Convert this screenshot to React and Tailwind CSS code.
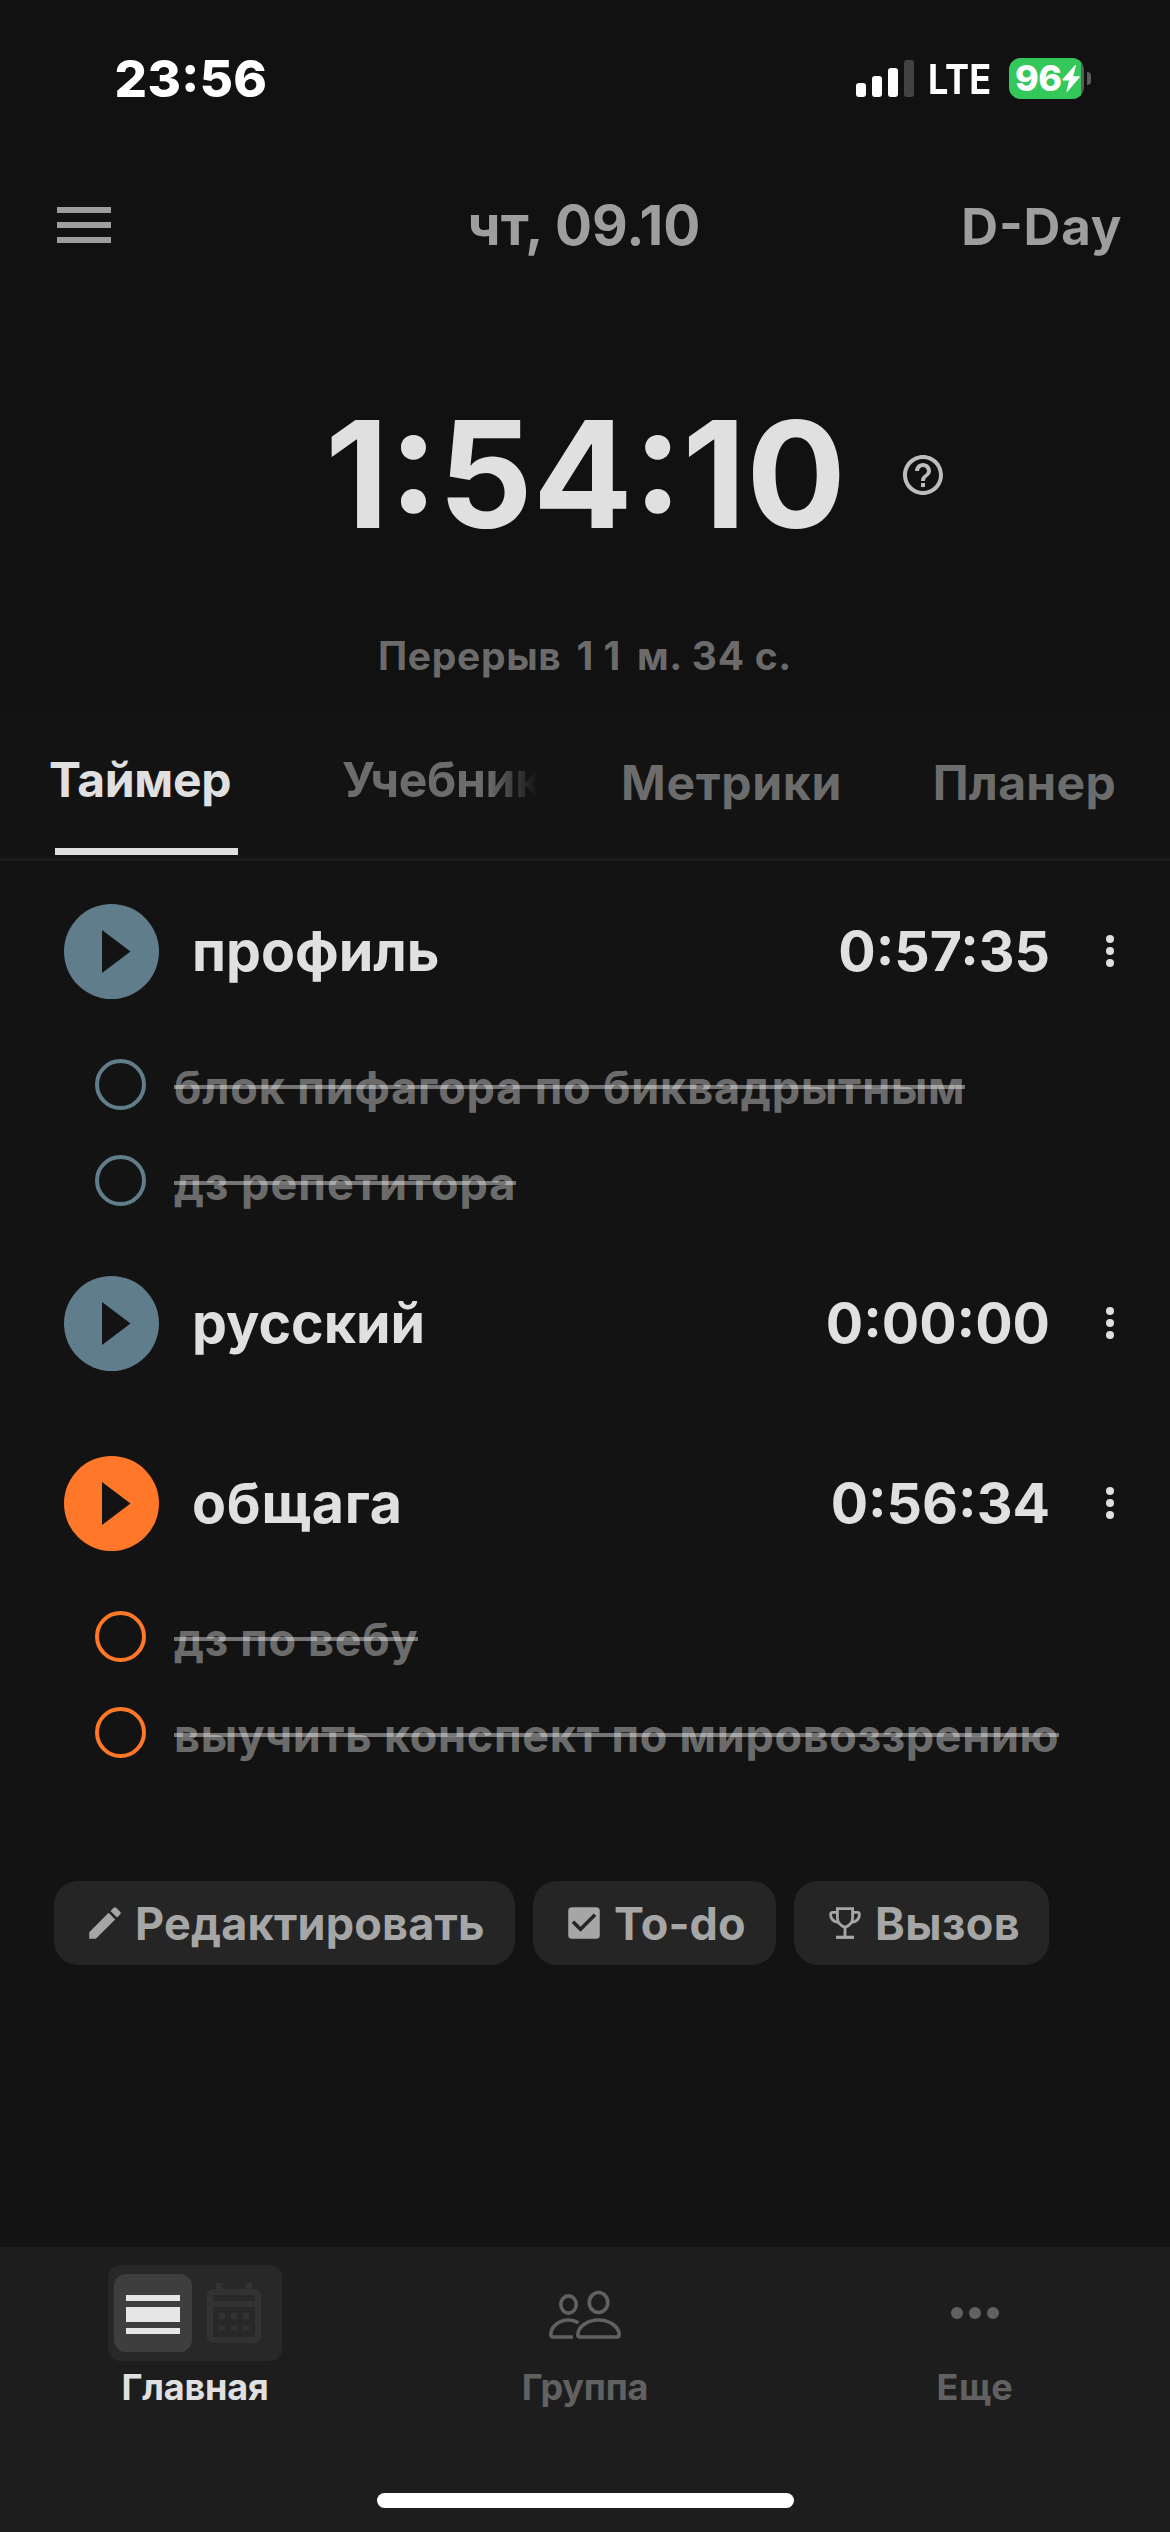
import React from "react";
import { MdHelpOutline, MdEdit, MdCheckBox } from "react-icons/md";

function StatusBar() {
  return (
    <div className="flex h-[156px] items-center">
      <span className="ml-[114.5px] w-[741.5px] text-[51px] leading-none font-extrabold tracking-[0.4px] text-white [font-feature-settings:'case']">23:56</span>
      <div className="flex h-[37px] items-end gap-[6px]">
        <i className="h-[14px] w-[10px] rounded-[3px] bg-white" />
        <i className="h-[21px] w-[10px] rounded-[3px] bg-white" />
        <i className="h-[29px] w-[10px] rounded-[3px] bg-white" />
        <i className="h-[37px] w-[10px] rounded-[3px] bg-[#424242]" />
      </div>
      <span className="ml-[14px] w-[81px] origin-left scale-x-[0.88] pt-[3px] text-[41px] leading-none font-bold text-white">LTE</span>
      <div className="flex h-[41px] w-[75px] overflow-hidden rounded-[12px] bg-[#5c5c5c]">
        <div className="flex h-[41px] w-[72px] items-center bg-[#34c759] pl-[6px]">
          <span className="w-[47px] text-[36px] leading-none font-extrabold tracking-[-0.5px] text-white">96</span>
          <svg className="h-[27px] w-[18px] shrink-0" viewBox="0 0 18 27" fill="#fff">
            <path d="M13.2 0 0.3 14.4Q0 15.4 1 15.6H7L4.4 26.4Q4.8 27.2 5.6 26.6L17.8 12.2Q18 11.4 17.2 11.2H11.2L14 .4Q13.8-.3 13.2 0Z" />
          </svg>
        </div>
      </div>
      <i className="ml-[3px] h-[13px] w-[4px] rounded-r-full bg-[#5c5c5c]" />
    </div>
  );
}

function Header() {
  return (
    <div className="flex h-[138px] items-center pr-[46.7px] pl-[57px] font-bold text-[#9e9e9e]">
      <div className="flex w-[410.6px] flex-col gap-[9px]">
        <i className="h-[6px] w-[54px] bg-[#9e9e9e]" />
        <i className="h-[6px] w-[54px] bg-[#9e9e9e]" />
        <i className="h-[6px] w-[54px] bg-[#9e9e9e]" />
      </div>
      <span className="text-[55px] leading-none">чт, 09.10</span>
      <span className="ml-auto w-[162px] pt-[2px] text-[51px] leading-none tracking-[0.79px] whitespace-nowrap [font-feature-settings:'case']">D-Day</span>
    </div>
  );
}

function Tab({ label, className, active }) {
  return (
    <div className={className}>
      <div className="h-[60px] text-[48px] leading-[60px] font-bold whitespace-nowrap">{label}</div>
      {active && <div className="mt-[37.5px] ml-[6px] h-[7.5px] w-[183px] bg-[#e0e0e0]" />}
    </div>
  );
}

function Dots() {
  return (
    <div className="flex w-[8px] flex-col gap-[4px]">
      <i className="size-[8px] rounded-full bg-[#e0e0e0]" />
      <i className="size-[8px] rounded-full bg-[#e0e0e0]" />
      <i className="size-[8px] rounded-full bg-[#e0e0e0]" />
    </div>
  );
}

function Subject({ name, time, color, className, nameClass = "" }) {
  return (
    <div className={"flex h-[95px] items-center pr-[56px] pl-[63.5px] text-[55.5px] leading-none font-bold text-[#e0e0e0] " + className}>
      <div className={"flex size-[95px] items-center rounded-full pl-[38px] " + color}>
        <svg className="h-[43px] w-[29px]" viewBox="0 0 29 43" fill="#131313"><path d="M0 0 28.5 21.5 0 43Z" /></svg>
      </div>
      <span className={"ml-[33.5px] grow " + nameClass}>{name}</span>
      <span className="mr-[56px]">{time}</span>
      <Dots />
    </div>
  );
}

function Task({ text, ring, className }) {
  return (
    <div className="flex h-[96px] items-center pl-[95px]">
      <div className={"size-[51px] rounded-full border-[4px] " + ring} />
      <div className={"relative ml-[28px] pt-[6px] text-[45px] leading-none font-bold whitespace-nowrap text-white/38 " + className}>
        {text}
        <i className="absolute top-[26px] left-0 h-[4px] w-full bg-white/41" />
      </div>
    </div>
  );
}

function Trophy() {
  return (
    <svg className="mx-[5px] size-[32px]" viewBox="0 0 32 32" fill="none" stroke="#a6a6a6" strokeWidth="2.8">
      <path d="M8.4 1.6h15.2v9.4c0 4-3.2 7.6-7.6 9.4-4.4-1.8-7.6-5.4-7.6-9.4Z" />
      <path d="M8.4 5.4H3.6c-1.4 0-2 .7-2 2 0 3.8 2.6 7 7.8 8M23.6 5.4h4.8c1.4 0 2 .7 2 2 0 3.8-2.6 7-7.8 8" />
      <path d="M16 20v10" />
      <path d="M7 30.3h18" strokeWidth="3.2" />
    </svg>
  );
}

function Chip({ icon, label, className }) {
  return (
    <div className={"flex h-[84px] items-center rounded-[24px] bg-[#252525] pl-[29.5px] text-[45px] leading-none font-bold text-[#a6a6a6] " + className}>
      {icon}
      <span className="ml-[9.5px] whitespace-nowrap">{label}</span>
    </div>
  );
}

function Calendar() {
  return (
    <svg className="ml-[15px] h-[60px] w-[54px]" viewBox="0 0 54 60" fill="#323232">
      <path fillRule="evenodd" d="M9 0h6v6h24V0h6v6h3a6 6 0 0 1 6 6v42a6 6 0 0 1-6 6H6a6 6 0 0 1-6-6V12a6 6 0 0 1 6-6h3ZM6 12v6h42v-6ZM6 24v30h42V24Z" />
      <path d="M12 30h6v6h-6zM24 30h6v6h-6zM36 30h6v6h-6zM12 42h6v6h-6zM24 42h6v6h-6zM36 42h6v6h-6z" />
    </svg>
  );
}

function People() {
  return (
    <svg className="mt-[3px] h-[50px] w-[72px]" viewBox="549 2290 72 50" fill="none" stroke="#616161" strokeWidth="3.6">
      <ellipse cx="568.5" cy="2304.5" rx="7.7" ry="8.6" />
      <ellipse cx="598.5" cy="2302.5" rx="9.3" ry="10" />
      <path d="M580.5 2337H616.5C618.3 2337 619.2 2336 619.2 2334.5C619 2327 610 2320 598.5 2320C587 2320 578 2327 577.8 2334.5C577.8 2336 578.7 2337 580.5 2337Z" />
      <path d="M573 2337H553.5C551.7 2337 550.8 2336 550.8 2334.5C551 2327 558.5 2320 568.5 2320C572.5 2320 575.5 2321 578.5 2322.8" />
    </svg>
  );
}

function NavItem({ label, className, children }) {
  return (
    <div className="flex w-[390px] flex-col items-center">
      <div className="flex h-[96px] items-center">{children}</div>
      <span className={"mt-[8px] text-[36px] leading-none font-bold " + className}>{label}</span>
    </div>
  );
}

export default function App() {
  return (
    <div className="flex h-[2532px] w-[1170px] flex-col overflow-hidden bg-[#131313] font-['Inter',sans-serif]">
      <div className="h-[711px] bg-[#111111]">
        <StatusBar />
        <Header />
        <div className="mt-[56px] flex h-[249px] items-center">
          <span className="ml-[325px] w-[573.5px] text-[148px] leading-none font-bold whitespace-nowrap text-[#e0e0e0]">1:54:10</span>
          <MdHelpOutline className="size-[48px] text-[#bdbdbd]" />
        </div>
        <div className="flex h-[112px] items-center justify-center text-[39px] leading-none font-bold tracking-[0.7px] text-[#6b6b6b]">
          <span className="whitespace-pre">Перерыв <span className="ml-[5px] tracking-[10.2px]">1</span><span className="mr-[6px]">1</span> м. 34 с.</span>
        </div>
      </div>
      <div className="flex h-[150px] border-b-[3px] border-[#1c1c1c] pt-[39px] text-[#6c6c6c]">
        <Tab active label="Таймер" className="ml-[49px] w-[293px] tracking-[-0.31px] text-[#e0e0e0]" />
        <Tab label="Учебник" className="mr-[76px] w-[203px] tracking-[-0.3px] [mask-image:linear-gradient(to_right,#000_72%,transparent_96.5%)]" />
        <Tab label="Метрики" className="w-[311.7px] pt-[3px] tracking-[0.69px]" />
        <Tab label="Планер" className="pt-[3px] tracking-[0.32px]" />
      </div>

      <Subject name="профиль" time="0:57:35" color="bg-[#607d8b]" className="mt-[42.5px]" />
      <div className="mt-[38px]">
        <Task text="блок пифагора по биквадрытным" ring="border-[#607d8b]" className="tracking-[0.82px]" />
        <Task text="дз репетитора" ring="border-[#607d8b]" className="tracking-[1.01px]" />
      </div>
      <Subject name="русский" time="0:00:00" color="bg-[#607d8b]" className="mt-[47px]" />
      <Subject name="общага" time="0:56:34" color="bg-[#ff7728]" className="mt-[85px]" nameClass="tracking-[0.76px]" />
      <div className="mt-[38px]">
        <Task text="дз по вебу" ring="border-[#ff7728]" className="tracking-[0.7px]" />
        <Task text="выучить конспект по мировоззрению" ring="border-[#ff7728]" className="tracking-[0.68px]" />
      </div>

      <div className="mt-[100.5px] flex gap-[18px] pl-[54px]">
        <Chip icon={<MdEdit className="size-[42px]" />} label="Редактировать" className="w-[461px] tracking-[0.2px]" />
        <Chip icon={<MdCheckBox className="size-[42px]" />} label="To-do" className="w-[243px] tracking-[0.14px]" />
        <Chip icon={<Trophy />} label="Вызов" className="w-[255px] tracking-[0.42px]" />
      </div>

      <div className="mt-auto flex h-[285px] shrink-0 flex-col items-center bg-[#1d1d1d]">
        <div className="flex pt-[18px]">
          <NavItem label="Главная" className="tracking-[-0.2px] text-[#e0e0e0]">
            <div className="flex h-[96px] w-[174px] items-center rounded-[12px] bg-[#282828] pl-[6px]">
              <div className="flex size-[78px] flex-col items-center rounded-[12px] bg-[#3e3e3e] pt-[21px]">
                <i className="h-[6px] w-[54px] bg-[#e6e6e6]" />
                <i className="mt-[6px] h-[15px] w-[54px] bg-[#e6e6e6]" />
                <i className="mt-[6px] h-[6px] w-[54px] bg-[#e6e6e6]" />
              </div>
              <Calendar />
            </div>
          </NavItem>
          <NavItem label="Группа" className="tracking-[-0.2px] text-[#616161]"><People /></NavItem>
          <NavItem label="Еще" className="tracking-[0.7px] text-[#616161]">
            <div className="flex gap-[6px]">
              <i className="size-[12px] rounded-full bg-[#616161]" />
              <i className="size-[12px] rounded-full bg-[#616161]" />
              <i className="size-[12px] rounded-full bg-[#616161]" />
            </div>
          </NavItem>
        </div>
        <div className="mt-[88px] h-[15px] w-[417px] rounded-full bg-white" />
      </div>
    </div>
  );
}
